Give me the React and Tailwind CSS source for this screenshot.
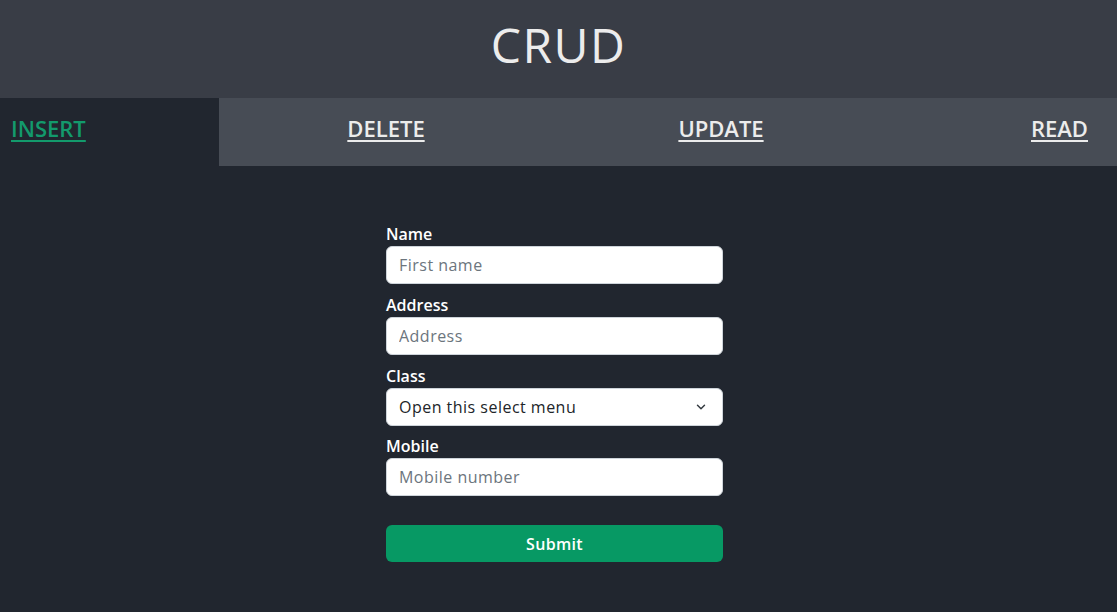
import { ChevronDown } from "lucide-react";

const font = { fontFamily: '"Open Sans", "Noto Sans", sans-serif' };

const inputCls =
  "h-[38px] w-full rounded-[6px] border border-[#ced4da] bg-white px-[12px] text-[16px] tracking-[0.03em] text-[#212529] placeholder:text-[#6c757d] outline-none";

function Field({ label, last, children }) {
  return (
    <div className={last ? "" : "mb-[9px]"}>
      <label className="block h-[24px] text-[16px] font-semibold leading-[24px] text-white">{label}</label>
      {children}
    </div>
  );
}

export default function App() {
  return (
    <div className="flex min-h-[612px] flex-col bg-[#21262f]" style={font}>
      <header className="flex h-[98px] items-center justify-center bg-[#393d46] pb-[8px]">
        <h1 className="text-[48px] font-medium tracking-[0.03em] text-[#ececec]">CRUD</h1>
      </header>

      <nav className="flex h-[68px] bg-[#474c55] pb-[8px] text-[22px] font-semibold">
        <div className="-mb-[8px] flex w-[219px] items-center bg-[#21262f] pb-[8px] pl-[11px]">
          <a href="#" className="text-[#139a6c] underline underline-offset-[3px]">INSERT</a>
        </div>
        <div className="flex w-[334px] items-center justify-center">
          <a href="#" className="text-[#ececec] underline underline-offset-[3px]">DELETE</a>
        </div>
        <div className="flex w-[336px] items-center justify-center">
          <a href="#" className="text-[#ececec] underline underline-offset-[3px]">UPDATE</a>
        </div>
        <div className="flex flex-1 items-center justify-end pr-[29px]">
          <a href="#" className="text-[#ececec] underline underline-offset-[3px]">READ</a>
        </div>
      </nav>

      <main className="flex justify-center pr-[8px] pt-[56px]">
        <form className="w-[337px]" onSubmit={(e) => e.preventDefault()}>
          <Field label="Name">
            <input placeholder="First name" className={inputCls} />
          </Field>
          <Field label="Address">
            <input placeholder="Address" className={inputCls} />
          </Field>
          <Field label="Class">
            <div className="relative mb-[-1px]">
              <select className={inputCls + " appearance-none"}>
                <option>Open this select menu</option>
                <option>One</option>
                <option>Two</option>
                <option>Three</option>
              </select>
              <ChevronDown className="pointer-events-none absolute right-[15px] top-[12px] h-[14px] w-[14px] text-[#343a40]" strokeWidth={2.5} />
            </div>
          </Field>
          <Field label="Mobile" last>
            <input placeholder="Mobile number" className={inputCls} />
          </Field>
          <button
            type="submit"
            className="mt-[29px] h-[37px] w-full rounded-[6px] bg-[#079964] text-[16px] font-semibold tracking-[0.02em] text-white"
          >
            Submit
          </button>
        </form>
      </main>
    </div>
  );
}
